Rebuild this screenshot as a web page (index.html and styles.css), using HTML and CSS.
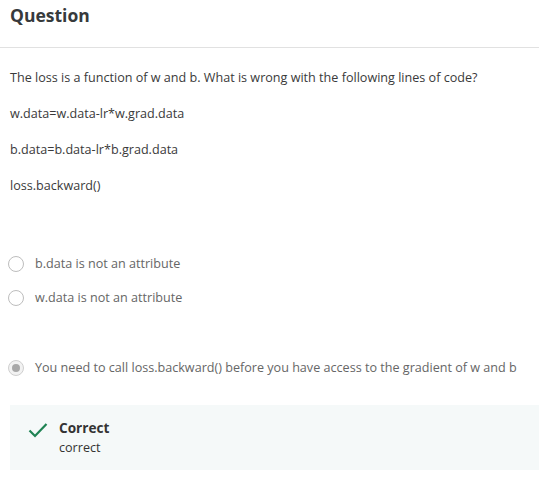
FILE: index.html
```html
<!DOCTYPE html>
<html>
<head>
<meta charset="utf-8">
<link rel="stylesheet" href="styles.css">
</head>
<body>
<div class="header"><h1 class="title">Question</h1></div>
<div class="content">
  <p class="q">The loss is a function of w and b. What is wrong with the following lines of code?</p>
  <p class="q">w.data=w.data-lr*w.grad.data</p>
  <p class="q">b.data=b.data-lr*b.grad.data</p>
  <p class="q">loss.backward()</p>
</div>
<div class="options">
  <div class="opt"><span class="radio"></span><span class="label">b.data is not an attribute</span></div>
  <div class="opt"><span class="radio"></span><span class="label">w.data is not an attribute</span></div>
  <div class="opt sel"><span class="radio checked"></span><span class="label">You need to call loss.backward() before you have access to the gradient of w and b</span></div>
</div>
<div class="feedback">
  <svg class="check" width="20" height="16" viewBox="0 0 20 16"><path d="M1.5 8.5 L7 14 L18.5 2" fill="none" stroke="#1f8354" stroke-width="2.2"/></svg>
  <div class="fb-text">
    <div class="fb-title">Correct</div>
    <div class="fb-body">correct</div>
  </div>
</div>
</body>
</html>
```
FILE: styles.css
```css
html, body { margin: 0; padding: 0; background: #fff; }
body { font-family: "Open Sans", sans-serif; color: #333; width: 539px; }
.header { border-bottom: 1px solid #e1e1e1; padding: 3px 10px 0; box-sizing: border-box; height: 48px; }
.title { margin: 0; font-size: 17.5px; line-height: 24px; font-weight: 700; color: #373a3c; }
.content { padding: 0 10px; }
.q { margin: 20px 0 0; font-size: 12.6px; line-height: 20px; color: #3a3a3a; }
.q + .q { margin-top: 16px; }
.options { margin-top: 58px; }
.opt { display: flex; align-items: center; height: 20px; padding-left: 8px; margin-bottom: 14px; }
.opt.sel { margin-top: 50px; }
.radio { width: 14px; height: 14px; border: 1.5px solid #bdbdbd; border-radius: 50%; margin-right: 11px; flex: none; box-sizing: content-box; position: relative; }
.radio.checked { border-color: #cfcfcf; background: #f2f2f2; }
.radio.checked::after { content: ""; position: absolute; left: 3px; top: 3px; width: 8px; height: 8px; border-radius: 50%; background: #a8a8a8; }
.label { font-size: 12.6px; line-height: 20px; color: #666; }
.feedback { margin: 27px 0 0 10px; background: #f5f9f9; display: flex; padding: 14px 0 13px 18px; height: 65px; box-sizing: border-box; }
.check { margin: 3px 11px 0 0; flex: none; }
.fb-title { font-size: 13.6px; font-weight: 700; line-height: 18px; color: #333; }
.fb-body { font-size: 12.6px; line-height: 22px; color: #333; }
```
